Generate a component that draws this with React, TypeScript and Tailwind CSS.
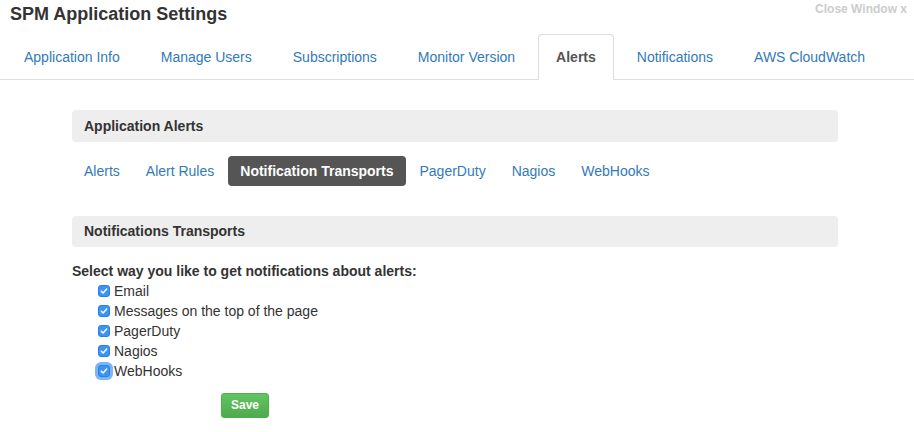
import React from 'react';

const mainTabs = ['Application Info', 'Manage Users', 'Subscriptions', 'Monitor Version', 'Alerts', 'Notifications', 'AWS CloudWatch'];
const subTabs = ['Alerts', 'Alert Rules', 'Notification Transports', 'PagerDuty', 'Nagios', 'WebHooks'];
const transports = ['Email', 'Messages on the top of the page', 'PagerDuty', 'Nagios', 'WebHooks'];

const Check = ({ focused }: { focused?: boolean }) => (
    <span className={`flex items-center justify-center w-[12px] h-[12px] rounded-[3px] bg-[#3c94f5] border border-[#2a7fe0] ${focused ? 'ring-[3px] ring-[#7fb5f3]' : ''}`}>
        <svg width="8" height="8" viewBox="0 0 8 8">
            <path d="M1.3 4.2 L3.1 6 L6.7 2" fill="none" stroke="white" strokeWidth="1.5" strokeLinecap="round" strokeLinejoin="round" />
        </svg>
    </span>
);

export default function App() {
    return (
        <div className="w-[914px] h-[432px] bg-white text-[#333] text-[14px] overflow-hidden" style={{ fontFamily: '"Liberation Sans", Arial, sans-serif' }}>
            <div className="flex justify-between items-start h-[34px]">
                <h1 className="pl-[10px] pt-[2px] text-[18px] leading-[24px] font-bold text-[#333]">SPM Application Settings</h1>
                <span className="pr-[7px] pt-[1px] text-[12px] leading-[16px] font-bold text-[#ccc]">Close Window x</span>
            </div>

            <div className="flex pl-[6px] gap-[5px] border-b border-[#ddd] h-[46px]">
                {mainTabs.map(t => (
                    t === 'Alerts' ? (
                        <span key={t} className="px-[17px] h-[46px] leading-[45px] font-bold text-[#555] bg-white border border-[#ddd] border-b-white rounded-t-[4px]">{t}</span>
                    ) : (
                        <span key={t} className="px-[17px] leading-[45px] text-[#337ab7] border border-transparent">{t}</span>
                    )
                ))}
            </div>

            <div className="ml-[72px] w-[766px]">
                <div className="mt-[30px] h-[32px] bg-[#eee] rounded-[4px] px-[12px] leading-[32px] font-bold">Application Alerts</div>

                <div className="flex gap-[2px] mt-[14px]">
                    {subTabs.map(t => (
                        t === 'Notification Transports' ? (
                            <span key={t} className="px-[12px] h-[30px] leading-[30px] rounded-[4px] bg-[#555] text-white font-bold">{t}</span>
                        ) : (
                            <span key={t} className="px-[12px] h-[30px] leading-[30px] text-[#337ab7]">{t}</span>
                        )
                    ))}
                </div>

                <div className="mt-[30px] h-[31px] bg-[#eee] rounded-[4px] px-[12px] leading-[31px] font-bold">Notifications Transports</div>

                <div className="mt-[14px] font-bold leading-[20px]">Select way you like to get notifications about alerts:</div>
                <div className="pl-[26px]">
                    {transports.map((t, i) => (
                        <div key={t} className="flex items-center gap-[4px] h-[20px]">
                            <Check focused={i === transports.length - 1} />
                            <span className="leading-[20px]">{t}</span>
                        </div>
                    ))}
                </div>

                <div className="pl-[149px] mt-[12px]">
                    <button className="w-[48px] h-[25px] rounded-[3px] border border-[#4cae4c] bg-gradient-to-b from-[#62c462] to-[#4eaa4e] text-white text-[12px] font-bold leading-[23px]">Save</button>
                </div>
            </div>
        </div>
    );
}
